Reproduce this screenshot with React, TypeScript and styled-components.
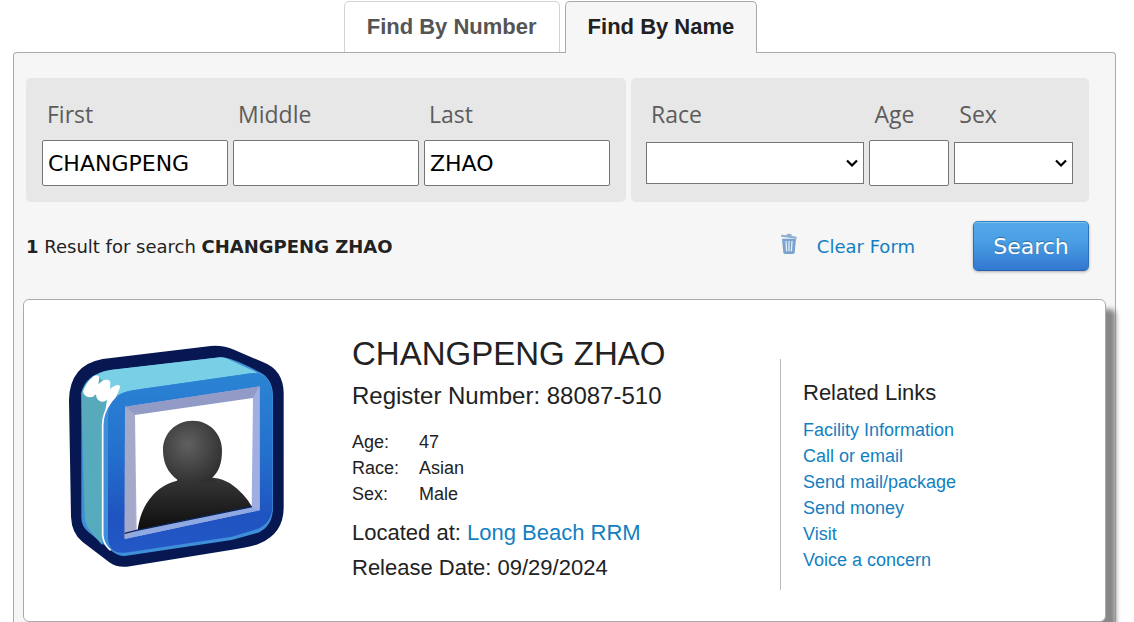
import React from "react";
import styled, { createGlobalStyle } from "styled-components";

const sans = `"Liberation Sans", Arial, Helvetica, sans-serif`;
const wide = `"DejaVu Sans", Verdana, sans-serif`;
const human = `"Open Sans", "Noto Sans", sans-serif`;

const GlobalStyle = createGlobalStyle`
  *, *::before, *::after { box-sizing: border-box; }
  body { margin: 0; background: #fff; color: #222; font-family: ${sans}; }
  a { color: #137fc1; text-decoration: none; }
`;

const Page = styled.div`
  display: flex;
  flex-direction: column;
  min-height: 100vh;
  padding: 1px 18px 0 13px;
`;

const Tabs = styled.nav`
  display: flex;
  justify-content: center;
  gap: 5px;
  padding-right: 28px;
`;

const Tab = styled.button<{ $active?: boolean }>`
  position: relative;
  z-index: ${(p) => (p.$active ? 1 : 0)};
  height: ${(p) => (p.$active ? 52 : 51)}px;
  margin-bottom: ${(p) => (p.$active ? -1 : 0)}px;
  padding: 0 22px ${(p) => (p.$active ? 2 : 1)}px;
  border: 1px solid ${(p) => (p.$active ? "#aaa" : "#d3d3d3")};
  border-bottom: 0;
  border-radius: 5px 5px 0 0;
  background: ${(p) => (p.$active ? "#f6f6f6" : "#fff")};
  color: ${(p) => (p.$active ? "#212121" : "#555")};
  font: bold 22px/49px ${sans};
  cursor: pointer;
`;

const Panel = styled.main`
  flex: 1;
  padding: 25px 9px 0;
  border: 1px solid #aaa;
  border-bottom: 0;
  border-radius: 4px 4px 0 0;
  background: #f6f6f6;
`;

const Form = styled.form`
  padding: 0 17px 0 3px;
`;

const Groups = styled.div`
  display: grid;
  grid-template-columns: 600fr 458fr;
  gap: 5px;
`;

const Group = styled.div<{ $side?: number }>`
  display: flex;
  min-width: 0;
  gap: 5px;
  padding: 21px 16px 16px ${(p) => p.$side ?? 16}px;
  border-radius: 5px;
  background: #e7e7e7;
`;

const Field = styled.div<{ $grow: number }>`
  display: flex;
  flex: ${(p) => p.$grow} 1 0;
  flex-direction: column;
  gap: 11px;
  min-width: 0;
`;

const Label = styled.label`
  padding-left: 5px;
  color: #5c5c5c;
  font: 23px/30px ${human};
`;

const TextBox = styled.input`
  width: 100%;
  height: 46px;
  padding: 0 5px;
  border: 1px solid #767676;
  border-radius: 2px;
  background: #fff;
  color: #000;
  font: 22px ${wide};
`;

const SelectWrap = styled.div`
  display: grid;
  align-items: center;
  padding: 2px 0;

  > * { grid-area: 1 / 1; }

  svg {
    justify-self: end;
    margin-right: 5px;
    pointer-events: none;
  }
`;

const Select = styled.select`
  appearance: none;
  width: 100%;
  height: 42px;
  padding: 0 22px 0 5px;
  border: 1px solid #767676;
  border-radius: 0;
  background: #fff;
  color: #000;
  font: 22px ${wide};
`;

const Actions = styled.div`
  display: flex;
  align-items: center;
  height: 50px;
  margin: 19px 0 28px;
  font: 18px/28px ${wide};
`;

const Summary = styled.p`
  flex: 1;
  margin: 0;
  padding-top: 2px;
`;

const ClearLink = styled.a`
  display: flex;
  align-items: flex-start;
  gap: 19px;
  margin-right: 58px;
  padding-top: 2px;
`;

const SearchButton = styled.button`
  width: 116px;
  height: 50px;
  border: 1px solid #2f74b5;
  border-color: #3583bf #2f6fb8 #2660ab;
  border-radius: 5px;
  background: linear-gradient(#53a9e9, #4a9fe4 40%, #3277d0);
  box-shadow: inset 0 1px 0 #7cc0f0, 0 1px 3px rgba(0, 0, 0, 0.3);
  color: #fff;
  font: 22px ${wide};
  text-shadow: 0 -1px 1px rgba(0, 0, 0, 0.3);
  cursor: pointer;
`;

const Card = styled.article`
  display: grid;
  grid-template-columns: 328px 428fr 325fr;
  min-height: 323px;
  border: 1px solid #aaa;
  border-radius: 6px;
  background: #fff;
  box-shadow: 10px 10px 5px #888;
`;

const Photo = styled.div`
  padding: 30px 0 0 26px;
`;

const Info = styled.section`
  padding-top: 34px;
`;

const Name = styled.h1`
  margin: 0;
  font: 33px/40px ${sans};
`;

const Register = styled.p`
  margin: 0 0 11px;
  font-size: 24px;
  line-height: 44px;
`;

const Facts = styled.dl`
  display: grid;
  grid-template-columns: 67px 1fr;
  margin: 0 0 8px;
  font-size: 18px;
  line-height: 26px;

  dd { margin: 0; }
`;

const Line = styled.p`
  margin: 0;
  font-size: 22px;
  line-height: 35px;
`;

const Related = styled.aside`
  align-self: start;
  margin-top: 59px;
  padding: 19px 0 17px 22px;
  border-left: 1px solid #bbb;
`;

const RelatedTitle = styled.h2`
  margin: 0 0 9px;
  font: 22px/30px ${sans};
`;

const Links = styled.ul`
  margin: 0;
  padding: 0;
  list-style: none;
  font-size: 18px;
  line-height: 26px;
`;

function Chevron() {
  return (
    <svg width="14" height="10" viewBox="0 0 14 10" fill="none" stroke="#000" strokeWidth="2.2" aria-hidden="true">
      <path d="M2 2.5 7 7.5 12 2.5" />
    </svg>
  );
}

function Trash() {
  return (
    <svg width="18" height="22" viewBox="0 0 54 66" aria-hidden="true">
      <path d="M4 5 20 7 22 2 34 3 35 8 51 12 50 17 3 11Z" fill="#8fb0d3" />
      <path d="M6 17H48L44 59Q43 63 38 63H16Q11 63 10 59Z" fill="#7ba3cd" />
      <path d="M18 24 20 55M27 24V55M36 24 34 55" stroke="#e2edf7" strokeWidth="4" />
    </svg>
  );
}

function Portrait() {
  return (
    <svg width="250" height="250" viewBox="0 0 750 750" role="img" aria-label="Inmate portrait">
      <defs>
        <linearGradient id="face" x1="0" y1="0" x2="0" y2="1">
          <stop offset="0" stopColor="#2b84d4" />
          <stop offset=".45" stopColor="#2470cd" />
          <stop offset=".8" stopColor="#1f53c0" />
          <stop offset="1" stopColor="#2458c6" />
        </linearGradient>
        <linearGradient id="side" x1="0" y1="0" x2="1" y2="1">
          <stop offset="0" stopColor="#57a9ba" />
          <stop offset="1" stopColor="#55adc0" />
        </linearGradient>
        <radialGradient id="head" cx=".42" cy=".38" r=".65">
          <stop offset="0" stopColor="#606060" />
          <stop offset="1" stopColor="#303030" />
        </radialGradient>
        <linearGradient id="body" x1="0" y1="0" x2="0" y2="1">
          <stop offset="0" stopColor="#373737" />
          <stop offset="1" stopColor="#0d0d0d" />
        </linearGradient>
      </defs>
      <path d="M158 87 482 48Q520 45 552 59L640 97Q700 120 701 190V535Q700 610 630 640Q605 651 560 657L240 709Q202 715 178 697L98 636Q65 610 63 560L57 210Q59 105 158 87Z" fill="#071751" />
      <path d="M94 190Q105 130 185 120L510 82Q540 80 620 122Q667 140 669 195V535Q668 588 625 608L545 630 225 678Q204 679 180 659L116 607Q93 588 94 560Z" fill="#3f8ed8" />
      <path d="M94 188Q110 140 165 123L230 180 178 215Q158 245 157 280V646L123 606Q106 586 104 560L96 280Z" fill="url(#side)" />
      <path d="M142 134Q160 122 185 119L510 82Q525 80 540 90L622 128 270 177Q220 184 198 200Z" fill="#79d0e6" />
      <path d="M240 182 600 130Q660 125 667 190V530Q666 580 620 598L545 620 225 668Q176 674 174 622V260Q176 192 240 182Z" fill="url(#face)" />
      <path d="M182 215Q158 250 158 285V615Q160 643 182 661" fill="none" stroke="#fff" strokeWidth="5" />
      <path d="M99 184Q108 158 130 139Q146 131 148 143L145 163Q157 149 168 149Q182 148 181 160L180 177Q194 165 205 165Q214 166 207 180L198 202Q186 214 175 232L166 242L171 209Q164 217 154 215Q139 213 138 193Q130 203 117 202Q101 199 99 184Z" fill="#fff" />
      <path d="M225 230 629 169V541L224 627Z" fill="#a9addc" />
      <path d="M225 230 629 169 609 204 255 255Z" fill="#929bc5" />
      <path d="M225 230 255 255V600L224 627Z" fill="#a4a9ca" />
      <path d="M609 204 629 169V541L605 529Z" fill="#a0aee2" />
      <path d="M255 255 609 204 605 529 260 600Z" fill="#fff" />
      <path d="M224 627 260 600 605 529 627 541Z" fill="#8fa9e3" />
      <path d="M263 600Q269 553 290 520Q324 465 382 452L490 443Q520 447 540 460Q580 487 606 530Z" fill="url(#body)" />
      <path d="M428 272C480 272 516 313 516 360C516 402 506 425 487 443L500 460H372L383 450C352 427 339 397 339 360C339 310 377 272 428 272Z" fill="url(#head)" />
      <path d="M224 610 260 601 606 530" fill="none" stroke="#0a235a" strokeWidth="4" />
    </svg>
  );
}

const links = ["Facility Information", "Call or email", "Send mail/package", "Send money", "Visit", "Voice a concern"];

export default function App() {
  return (
    <Page>
      <GlobalStyle />
      <Tabs>
        <Tab type="button">Find By Number</Tab>
        <Tab type="button" $active>Find By Name</Tab>
      </Tabs>
      <Panel>
        <Form onSubmit={(e) => e.preventDefault()}>
          <Groups>
            <Group>
              <Field $grow={1}>
                <Label htmlFor="first">First</Label>
                <TextBox id="first" defaultValue="CHANGPENG" />
              </Field>
              <Field $grow={1}>
                <Label htmlFor="middle">Middle</Label>
                <TextBox id="middle" />
              </Field>
              <Field $grow={1}>
                <Label htmlFor="last">Last</Label>
                <TextBox id="last" defaultValue="ZHAO" />
              </Field>
            </Group>
            <Group $side={15}>
              <Field $grow={219}>
                <Label htmlFor="race">Race</Label>
                <SelectWrap>
                  <Select id="race"><option /></Select>
                  <Chevron />
                </SelectWrap>
              </Field>
              <Field $grow={80}>
                <Label htmlFor="age">Age</Label>
                <TextBox id="age" />
              </Field>
              <Field $grow={119}>
                <Label htmlFor="sex">Sex</Label>
                <SelectWrap>
                  <Select id="sex"><option /></Select>
                  <Chevron />
                </SelectWrap>
              </Field>
            </Group>
          </Groups>
          <Actions>
            <Summary><b>1</b> Result for search <b>CHANGPENG ZHAO</b></Summary>
            <ClearLink href="#clear"><Trash />Clear Form</ClearLink>
            <SearchButton type="submit">Search</SearchButton>
          </Actions>
        </Form>
        <Card>
          <Photo><Portrait /></Photo>
          <Info>
            <Name>CHANGPENG ZHAO</Name>
            <Register>Register Number: 88087-510</Register>
            <Facts>
              <dt>Age:</dt><dd>47</dd>
              <dt>Race:</dt><dd>Asian</dd>
              <dt>Sex:</dt><dd>Male</dd>
            </Facts>
            <Line>Located at: <a href="#facility">Long Beach RRM</a></Line>
            <Line>Release Date: 09/29/2024</Line>
          </Info>
          <Related>
            <RelatedTitle>Related Links</RelatedTitle>
            <Links>
              {links.map((text) => (
                <li key={text}><a href="#related">{text}</a></li>
              ))}
            </Links>
          </Related>
        </Card>
      </Panel>
    </Page>
  );
}
